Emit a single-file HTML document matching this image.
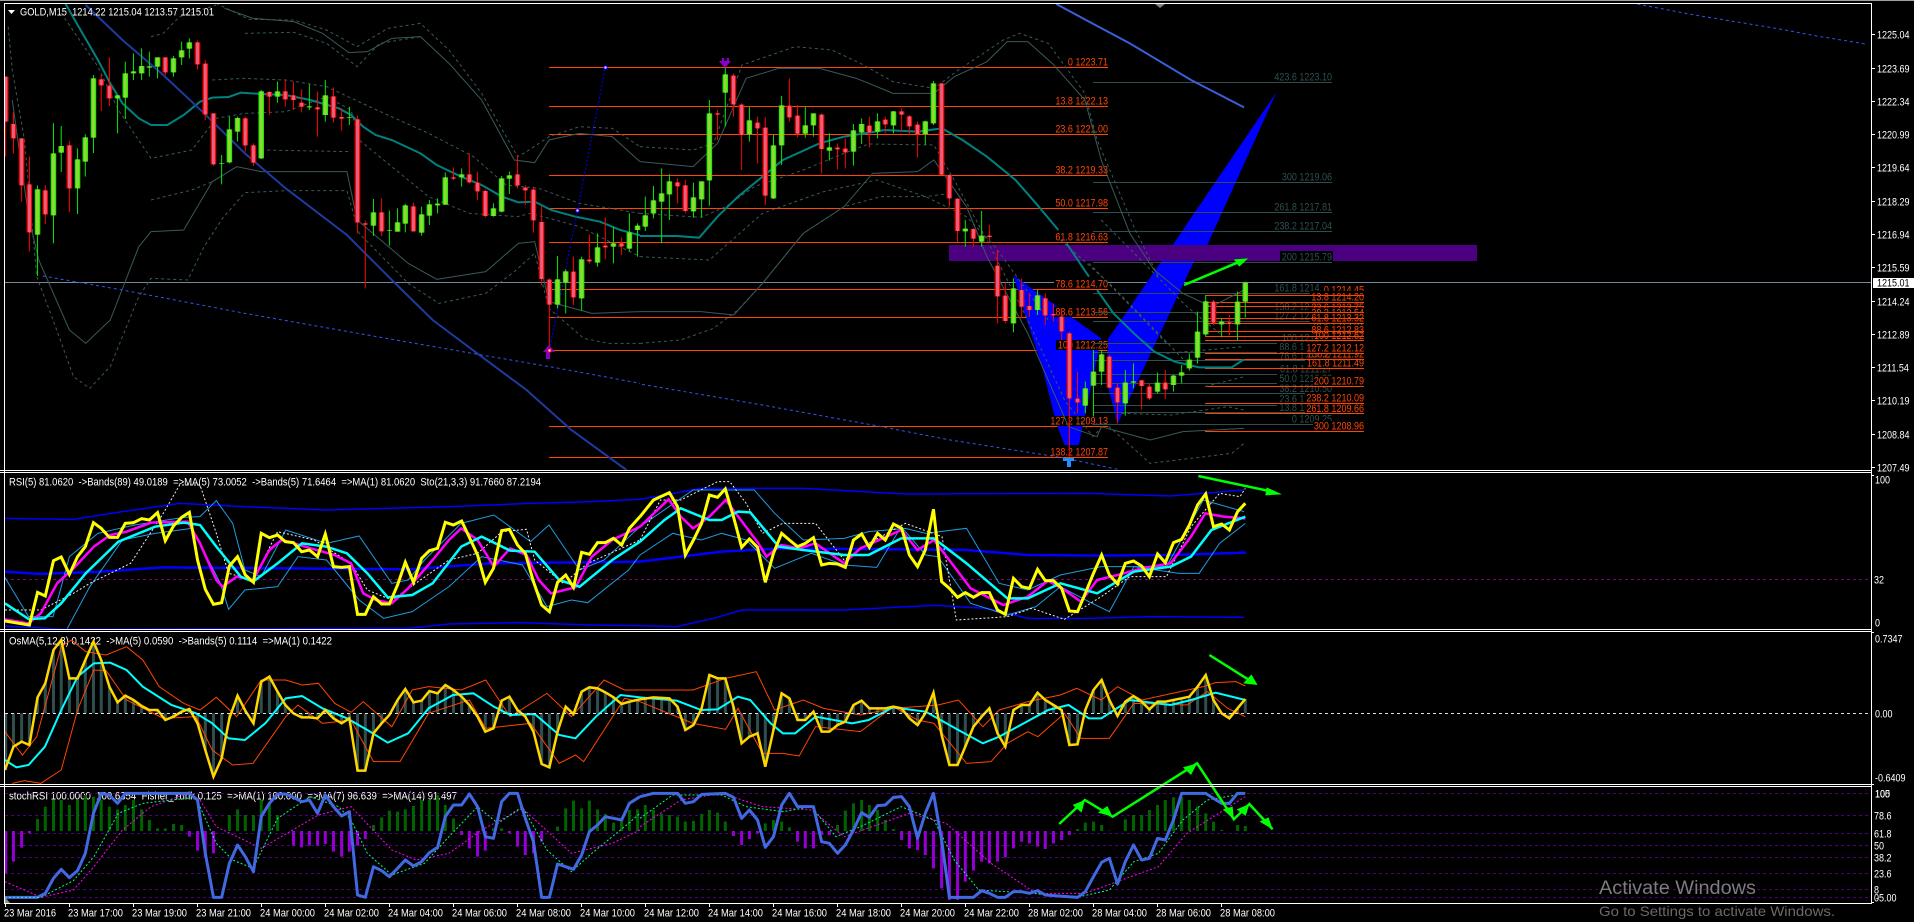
<!DOCTYPE html>
<html><head><meta charset="utf-8"><title>GOLD,M15</title>
<style>
html,body{margin:0;padding:0;background:#000;width:1914px;height:922px;overflow:hidden}
svg{display:block}
svg *{vector-effect:non-scaling-stroke}
text{font-family:"Liberation Sans",sans-serif;font-size:11px;white-space:pre;fill:#fff}
.o{fill:#ff4500;text-anchor:end}
.g{fill:#2f4f4f;text-anchor:end}
.n{fill:none}
.d{stroke-dasharray:3 3}
.s{stroke-dasharray:2 2}
</style></head><body>
<svg width="1914" height="922" viewBox="0 0 1914 922" xmlns="http://www.w3.org/2000/svg">
<defs>
<clipPath id="cm"><rect x="5" y="4" width="1866" height="466"/></clipPath>
<clipPath id="cr"><rect x="5" y="473" width="1866" height="156"/></clipPath>
<clipPath id="co"><rect x="5" y="632" width="1866" height="152"/></clipPath>
<clipPath id="cs"><rect x="5" y="787" width="1866" height="116"/></clipPath>
</defs>
<rect width="1914" height="922" fill="#000"/>
<rect x="0" y="0" width="1914" height="1" fill="#a0a0a0"/>

<!-- MAIN PANEL -->
<g clip-path="url(#cm)">
<rect x="5" y="282" width="1866" height="1" fill="#778899"/>
<!-- fib 1 lines -->
<path stroke="#ff4500" stroke-width="1" d="M549 67.5H1108M549 106.5H1108M549 134.5H1108M549 175.5H1108M549 208.5H1108M549 242.5H1108M549 289.5H1108M549 317.5H1108M549 350.5H1108M549 426.5H1108M549 457.5H1108"/>
<!-- harmonic polygons -->
<g transform="translate(640 0) scale(.40816 .33333)">
<polygon fill="#0000ff" points="915,826 1130,1015 1112,1120 1075,1335 1040,1335 1020,1270 985,1100 945,950"/>
<polygon fill="#0000ff" points="1560,275 1390,735 1355,790 1170,1272 1145,1150 1145,1020 1305,735"/>
</g>
<rect x="949" y="245" width="528" height="16" fill="#4b0082"/>
<!-- fib 1 labels -->
<g>
<rect x="1066" y="57" width="42" height="10" fill="#000"/><text class="o" transform="matrix(.82 0 0 1 1108 65.7)">0 1223.71</text>
<rect x="1054" y="96" width="54" height="10" fill="#000"/><text class="o" transform="matrix(.82 0 0 1 1108 104.7)">13.8 1222.13</text>
<rect x="1054" y="124" width="54" height="10" fill="#000"/><text class="o" transform="matrix(.82 0 0 1 1108 132.7)">23.6 1221.00</text>
<rect x="1054" y="165" width="54" height="10" fill="#000"/><text class="o" transform="matrix(.82 0 0 1 1108 173.7)">38.2 1219.33</text>
<rect x="1054" y="198" width="54" height="10" fill="#000"/><text class="o" transform="matrix(.82 0 0 1 1108 206.7)">50.0 1217.98</text>
<rect x="1054" y="232" width="54" height="10" fill="#000"/><text class="o" transform="matrix(.82 0 0 1 1108 240.7)">61.8 1216.63</text>
<rect x="1054" y="279" width="54" height="10" fill="#000"/><text class="o" transform="matrix(.82 0 0 1 1108 287.7)">78.6 1214.70</text>
<rect x="1054" y="307" width="54" height="10" fill="#000"/><text class="o" transform="matrix(.82 0 0 1 1108 315.7)">88.6 1213.56</text>
<rect x="1056" y="340" width="52" height="10" fill="#000"/><text class="o" transform="matrix(.82 0 0 1 1108 348.7)">100 1212.25</text>
<rect x="1049" y="416" width="59" height="10" fill="#000"/><text class="o" transform="matrix(.82 0 0 1 1108 424.7)">127.2 1209.13</text>
<rect x="1049" y="447" width="59" height="10" fill="#000"/><text class="o" transform="matrix(.82 0 0 1 1108 455.7)">138.2 1207.87</text>
</g>
<!-- fib 2 lines & labels -->
<path stroke="#2f4f4f" stroke-width="1" d="M1093 82.5H1332M1093 182.5H1332M1093 212.5H1332M1093 231.5H1332M1093 262.5H1332M1093 293.5H1332M1093 312.5H1332M1093 321.5H1332M1093 343.5H1332M1093 352.5H1332M1093 360.5H1332M1093 374.5H1332M1093 383.5H1332M1093 393.5H1332M1093 405.5H1332M1093 412.5H1332M1093 424.5H1332"/>
<g>
<rect x="1274" y="72" width="58" height="10" fill="#000"/><text class="g" transform="matrix(.82 0 0 1 1332 80.7)">423.6 1223.10</text>
<rect x="1280" y="172" width="52" height="10" fill="#000"/><text class="g" transform="matrix(.82 0 0 1 1332 180.7)">300 1219.06</text>
<rect x="1274" y="202" width="58" height="10" fill="#000"/><text class="g" transform="matrix(.82 0 0 1 1332 210.7)">261.8 1217.81</text>
<rect x="1274" y="221" width="58" height="10" fill="#000"/><text class="g" transform="matrix(.82 0 0 1 1332 229.7)">238.2 1217.04</text>
<rect x="1280" y="251" width="53" height="11" fill="#000"/><text class="g" transform="matrix(.82 0 0 1 1332 260.7)">200 1215.79</text>
<rect x="1272" y="283" width="60" height="10" fill="#000"/><text class="g" transform="matrix(.82 0 0 1 1332 291.3)">161.8 1214.54</text>
<rect x="1274" y="302" width="58" height="10" fill="#000"/><text class="g" transform="matrix(.82 0 0 1 1332 310.7)">138.2 1213.98</text>
<rect x="1274" y="310" width="58" height="10" fill="#000"/><text class="g" transform="matrix(.82 0 0 1 1332 319.3)">127.2 1213.74</text>
<rect x="1280" y="332" width="52" height="10" fill="#000"/><text class="g" transform="matrix(.82 0 0 1 1332 341.3)">100 1212.97</text>
<rect x="1277" y="342" width="55" height="10" fill="#000"/><text class="g" transform="matrix(.82 0 0 1 1332 350.7)">88.6 1212.66</text>
<rect x="1277" y="350" width="55" height="10" fill="#000"/><text class="g" transform="matrix(.82 0 0 1 1332 359.3)">78.6 1212.27</text>
<rect x="1277" y="364" width="55" height="10" fill="#000"/><text class="g" transform="matrix(.82 0 0 1 1332 372.7)">61.8 1211.27</text>
<rect x="1277" y="373" width="55" height="10" fill="#000"/><text class="g" transform="matrix(.82 0 0 1 1332 382)">50.0 1210.88</text>
<rect x="1277" y="383" width="55" height="10" fill="#000"/><text class="g" transform="matrix(.82 0 0 1 1332 392)">38.2 1210.50</text>
<rect x="1277" y="394" width="55" height="10" fill="#000"/><text class="g" transform="matrix(.82 0 0 1 1332 402.7)">23.6 1210.02</text>
<rect x="1277" y="402" width="55" height="10" fill="#000"/><text class="g" transform="matrix(.82 0 0 1 1332 411)">13.8 1209.70</text>
<rect x="1290" y="413" width="42" height="10" fill="#000"/><text class="g" transform="matrix(.82 0 0 1 1332 422.3)">0 1209.25</text>
</g>
<!-- fib 3 labels & lines -->
<g>
<rect x="1322" y="284" width="42" height="10" fill="#000"/><text class="o" transform="matrix(.82 0 0 1 1364 293.3)">0 1214.45</text>
<rect x="1310" y="291" width="54" height="11" fill="#000"/><text class="o" transform="matrix(.82 0 0 1 1364 300.3)">13.8 1214.20</text>
<rect x="1310" y="302" width="54" height="10" fill="#000"/><text class="o" transform="matrix(.82 0 0 1 1364 311)">23.6 1213.75</text>
<rect x="1310" y="308" width="54" height="10" fill="#000"/><text class="o" transform="matrix(.82 0 0 1 1364 316.5)">38.2 1213.54</text>
<rect x="1310" y="322" width="54" height="7" fill="#000"/><text class="o" transform="matrix(.82 0 0 1 1364 329.3)">78.6 1213.01</text>
<rect x="1310" y="312" width="54" height="11" fill="#000"/><text class="o" transform="matrix(.82 0 0 1 1364 321.3)">61.8 1213.32</text>
<rect x="1310" y="325" width="54" height="11" fill="#000"/><text class="o" transform="matrix(.82 0 0 1 1364 333.7)">88.6 1212.83</text>
<rect x="1314" y="335" width="50" height="5" fill="#000"/><text class="o" transform="matrix(.82 0 0 1 1364 339)">100 1212.62</text>
<rect x="1305" y="349" width="59" height="5" fill="#000"/><text class="o" transform="matrix(.82 0 0 1 1364 357.7)">138.2 1211.92</text>
<rect x="1305" y="343" width="59" height="11" fill="#000"/><text class="o" transform="matrix(.82 0 0 1 1364 351.7)">127.2 1212.12</text>
<rect x="1305" y="358" width="59" height="10" fill="#000"/><text class="o" transform="matrix(.82 0 0 1 1364 366.7)">161.8 1211.49</text>
<rect x="1313" y="376" width="51" height="10" fill="#000"/><text class="o" transform="matrix(.82 0 0 1 1364 384.7)">200 1210.79</text>
<rect x="1305" y="393" width="59" height="10" fill="#000"/><text class="o" transform="matrix(.82 0 0 1 1364 401.7)">238.2 1210.09</text>
<rect x="1305" y="403" width="59" height="10" fill="#000"/><text class="o" transform="matrix(.82 0 0 1 1364 412)">261.8 1209.66</text>
<rect x="1313" y="421" width="51" height="10" fill="#000"/><text class="o" transform="matrix(.82 0 0 1 1364 429.7)">300 1208.96</text>
</g>
<path stroke="#ff4500" stroke-width="1" d="M1205 295.5H1364M1205 302.5H1364M1205 306.5H1364M1205 312.5H1364M1205 318.5H1364M1205 323.5H1364M1205 331.5H1364M1205 336.5H1364M1205 340.5H1364M1205 353.5H1364M1205 359.5H1364M1205 368.5H1364M1205 386.5H1364M1205 403.5H1364M1205 413.5H1364M1205 431.5H1364"/>
<!-- left panel lines: zoom1 -->
<g transform="scale(.40816 .33333)" fill="none">
<g stroke="#3a5a5a" stroke-width="1">
<polyline points="30,300 70,650 95,780 170,990 210,1030 270,960 340,740 370,695 450,690 520,545 580,500 640,515 850,515 875,660 1000,790 1070,838 1190,815 1270,730 1310,725 1345,905 1450,940 1568,935"/>
<polyline points="550,25 620,55 720,65 790,100 855,158 900,155 960,115 1030,110 1100,190 1180,300 1260,480 1310,488 1345,420 1420,400 1500,410 1568,485"/>
</g>
<g stroke="#3a5a5a" stroke-width="1" class="d">
<polyline points="20,80 30,210 60,420 90,830 130,960 180,1130 220,1165 270,1100 340,890 370,835 460,840 500,740 545,655 600,578 700,572 850,572 880,700 1000,850 1075,910 1190,880 1260,815 1310,760 1345,925 1430,1015 1490,1030 1568,1030"/>
<polyline points="530,10 610,58 720,60 800,90 875,140 950,85 1030,70 1100,150 1180,280 1268,470 1290,455 1345,410 1420,380 1500,385 1568,440"/>
<polyline points="600,100 720,97 800,130 875,200 930,130 1030,110"/>
<polyline points="370,110 400,100 440,50 530,15"/>
<polyline points="520,240 600,235 700,240 800,260 870,300 950,345 1050,400 1160,470 1240,555 1320,565 1420,610 1568,640"/>
<polyline points="150,40 240,200 290,330 370,475 470,450 530,355 600,340 700,335 800,290 860,330 880,420 960,500 1050,590 1150,640 1268,650 1300,640 1420,680 1568,770"/>
<polyline points="370,600 470,570 520,545"/>
<polyline points="640,450 860,455"/>
</g>
<polyline stroke="#008080" stroke-width="2" points="160,10 195,85 240,180 270,250 300,310 340,355 370,375 410,375 450,345 490,305 520,293 560,291 590,278 640,282 700,285 760,300 830,325 860,345 890,380 920,405 960,420 1030,460 1070,495 1130,530 1180,555 1230,590 1270,607 1310,605 1350,630 1410,650 1470,665 1520,690 1568,706"/>
<polyline stroke="#1f3a9e" stroke-width="2" points="210,15 300,120 400,225 500,340 600,460 700,565 850,705 960,840 1060,960 1180,1070 1290,1170 1400,1290 1490,1370 1535,1410"/>
<polyline stroke="#3355ee" stroke-width="1" class="d" points="105,828 300,870 600,940 900,1005 1180,1065 1370,1105 1568,1150"/>
<polyline stroke="#0000ff" stroke-width="1" class="s" points="1346,1050 1415,630 1483,202"/>
<g stroke="#ff0000" stroke-width="1"><path d="M14 230V470M33 335V460M53 415V605M72 470V755M111 555V672M170 423V636M248 225V333M268 172V318M405 172V225M484 122V208M503 180V360M523 340V497M601 350V455M621 430V498M660 273V345M699 238V320M719 245V330M739 268V337M778 275V410M817 262V368M837 325V392M876 347V700M895 662V865M935 595V708M1013 608V695M1111 502V540M1150 460V550M1170 515V600M1189 568V653M1268 465V565M1287 556V615M1307 560V698M1327 618V855M1346 835V1050M1405 770V915M1444 703V790M1483 652V778M1523 712V765"/></g>
<g stroke="#00e800" stroke-width="1"><path d="M92 556V828M131 370V730M150 378V516M190 445V642M209 403V530M229 225V459M288 285V400M307 185V357M327 160V240M347 145V240M366 155V230M386 172V235M425 168V230M445 125V195M464 115V175M543 465V553M562 350V490M582 350V424M640 270V477M680 245V308M758 253V330M797 240V365M856 320V375M915 597V708M954 632V737M974 625V695M993 612V697M1033 620V707M1052 600V675M1072 595V640M1091 517V615M1131 505V560M1209 610V650M1229 528V637M1248 515V582M1366 768V925M1386 808V940M1425 770V932M1464 700V800M1503 680V790M1542 640V755M1562 670V770"/></g>
<g stroke="#ff0000" stroke-width="5.5"><path id="r1" d="M14 230V365M33 372V415M53 415V556M72 553V697M111 571V643M170 436V565M248 238V256M268 257V295M405 172V217M484 127V193M503 191V343M523 340V493M601 355V436M621 436V488M660 276V290M699 274V298M719 286V300M739 308V320M778 322V328M817 289V353M837 351V356M876 358V667M895 670V674M935 637V694M1013 619V694M1111 532V536M1150 523V547M1170 548V574M1189 573V648M1268 523V556M1287 563V571M1307 569V661M1327 666V837M1346 839V914M1405 815V892M1444 779V784M1483 737V742M1523 730V739"/></g>
<use href="#r1" stroke="#e4607c" stroke-width="3"/>
<g stroke="#22ee00" stroke-width="5.5"><path id="g1" d="M92 568V704M131 460V646M150 438V458M190 478V565M209 412V485M229 235V413M288 286V295M307 220V293M327 214V220M347 198V220M366 199V203M386 172V200M425 175V217M445 151V172M464 127V146M543 489V491M562 388V487M582 354V395M640 274V475M680 274V290M758 319V322M797 286V345M856 352V354M915 637V677M954 690V692M974 667V695M993 616V671M1033 643V698M1052 613V647M1072 611V616M1091 532V614M1131 523V532M1209 625V648M1229 535V635M1248 526V536M1366 838V914M1386 814V848M1425 778V895M1464 742V788M1503 730V740M1542 697V746M1562 677V690"/></g>
<use href="#g1" stroke="#90d838" stroke-width="3"/>
</g>
<!-- zoom2 lines -->
<g transform="translate(640 0) scale(.40816 .33333)" fill="none">
<g stroke="#3a5a5a" stroke-width="1">
<polyline points="0,485 130,500 190,430 260,235 340,205 440,205 530,235 620,280 720,280 770,230 850,185 900,125 950,125 1010,190 1090,300 1130,480 1200,700 1260,810 1330,880 1400,920 1480,870"/>
<polyline points="0,935 150,935 230,945 300,850 400,700 500,620 570,520 680,515 720,480 800,620 850,770 950,1000 1050,1280 1120,1310 1130,1280 1250,1320 1330,1295 1480,1285"/>
</g>
<g stroke="#3a5a5a" stroke-width="1" class="d">
<polyline points="0,440 130,450 180,430 250,195 380,140 470,150 540,190 620,245 720,265 780,210 890,120 930,100 1000,130 1090,280 1120,420 1210,680 1270,830"/>
<polyline points="0,640 150,652 210,620 280,560 400,510 500,460 560,432 720,435 770,540 850,720 950,960 1040,1200 1110,1310 1140,1270 1250,1390 1450,1360 1480,1330"/>
<polyline points="0,770 170,780 300,640 450,575 580,540 700,590 800,650 870,740 1000,960"/>
<polyline points="0,1030 100,1020 180,985 240,930 300,850 400,700 500,620 590,590 700,590 760,580"/>
<polyline points="1030,720 1150,850 1270,1000 1340,1090"/>
<polyline points="1100,790 1290,1030"/>
<polyline points="1130,660 1340,920 1420,1000"/>
<polyline points="1290,1060 1480,1040"/>
<polyline points="1385,1160 1480,1130"/>
<polyline points="1180,1240 1300,1245 1440,1220 1480,1230"/>
</g>
<polyline stroke="#008080" stroke-width="2" points="0,708 90,708 145,713 190,650 240,590 290,540 350,480 440,430 500,410 600,390 680,395 740,385 790,420 850,470 920,540 970,610 1025,690"/>
<polyline stroke="#008080" stroke-width="2" points="1045,730 1100,830"/>
<polyline stroke="#008080" stroke-width="2" points="1120,870 1160,940 1210,1000 1260,1055 1310,1085 1370,1102 1450,1102 1480,1078"/>
<polyline stroke="#3b5fd8" stroke-width="2" points="1020,12 1100,65 1200,130 1350,240 1480,322"/>
<polyline stroke="#3355ee" stroke-width="1" class="d" points="5,1153 300,1215 570,1275 760,1320 1030,1372 1170,1408"/>
<g stroke="#ff0000" stroke-width="1"><path d="M92 535V610M111 540V640M190 330V420M229 220V350M249 310V510M288 350V490M307 352V615M366 235V365M386 315V412M445 340V520M484 430V508M503 415V505M562 350V442M601 350V400M641 325V395M660 345V405M680 365V472M739 250V525M758 522V620M778 595V725M817 685V740M856 675V725M876 750V970M895 850V970M935 835V955M954 878V950M993 880V975M1013 910V965M1033 930V1020M1052 995V1370M1072 1115V1240M1150 1065V1165M1170 1150V1270M1229 1140V1228M1248 1150V1200M1287 1110V1197M1405 900V975M1444 945V1005"/></g>
<g stroke="#00e800" stroke-width="1"><path d="M13 590V693M33 558V655M53 505V730M72 522V660M131 548V653M151 545V652M170 300V617M209 200V380M268 320V425M327 403V597M347 288V495M405 320V413M425 340V410M464 400V482M523 372V497M543 355V432M582 340V415M621 333V400M699 362V435M719 243V375M797 660V740M837 633V740M915 835V997M974 870V945M1091 1145V1240M1111 1050V1250M1131 1050V1155M1189 1110V1247M1209 1090V1165M1268 1118V1180M1307 1125V1175M1327 1095V1150M1346 1060V1112M1366 935V1090M1386 885V1008M1425 955V1012M1464 875V1020M1483 845V952"/></g>
<g stroke="#ff0000" stroke-width="5.5"><path id="r2" d="M92 547V559M111 556V633M190 340V344M229 227V313M249 314V405M288 368V385M307 383V587M366 317V352M386 347V401M445 344V447M484 443V448M503 446V457M562 377V397M601 359V373M641 334V344M660 349V379M680 374V402M739 250V524M758 525V595M778 596V693M817 687V716M856 707V711M876 797V889M895 887V963M935 870V920M954 918V930M993 895V946M1013 942V946M1033 950V994M1052 1000V1195M1072 1196V1207M1150 1070V1163M1170 1163V1207M1229 1141V1158M1248 1160V1195M1287 1148V1168M1405 905V968M1444 967V972"/></g>
<use href="#r2" stroke="#e4607c" stroke-width="3"/>
<g stroke="#22ee00" stroke-width="5.5"><path id="g2" d="M13 646V680M33 601V640M53 580V605M72 544V583M131 592V634M151 544V598M170 340V541M209 223V278M268 361V403M327 436V595M347 316V436M405 376V401M425 340V376M464 442V452M523 391V455M543 372V397M582 364V395M621 334V376M699 364V402M719 250V370M797 686V694M837 707V725M915 865V970M974 886V930M1091 1165V1217M1111 1115V1157M1131 1063V1115M1189 1148V1210M1209 1144V1148M1268 1148V1175M1307 1127V1155M1327 1117V1127M1346 1079V1105M1366 995V1073M1386 904V1003M1425 965V973M1464 905V973M1483 848V905"/></g>
<use href="#g2" stroke="#90d838" stroke-width="3"/>
<polyline stroke="#00ff00" stroke-width="2.5" points="1333,855 1475,782"/>
<polygon fill="#00ff00" points="1490,775 1455,778 1468,800"/>
</g>
<!-- zoom3 -->
<g transform="translate(1274 0) scale(.40816 .33333)" fill="none">
<polyline stroke="#3355ee" stroke-width="1" class="d" points="890,12 1030,45 1230,85 1330,108 1455,133"/>
</g>
<!-- markers -->
<rect x="604" y="66" width="3" height="3" fill="#fff" stroke="#0000ff"/>
<rect x="576" y="209" width="3" height="3" fill="#fff" stroke="#0000ff"/>
<path d="M549 345l-6 7h3v7h4v-7h5z" fill="#8a00c8"/>
<path d="M725 68l-6-7h3v-3h2v3h3v-3h-0l2 0v3h2z" fill="#8a00c8"/>
<rect x="548" y="349" width="3" height="3" fill="#fff" stroke="#ff0000"/>
<path d="M1063 458h11v3h-3v6h-4v-6h-4z" fill="#1e90ff"/>
<path d="M1155 4h10l-5 4z" fill="#808080"/>
</g>
<text transform="translate(20 15.5)" textLength="194" lengthAdjust="spacingAndGlyphs">GOLD,M15  1214.22 1215.04 1213.57 1215.01</text>
<path d="M8 10h7l-3.500 4z" fill="#fff"/>

<!-- RSI PANEL -->
<text x="9" y="485.500" textLength="532" lengthAdjust="spacingAndGlyphs">RSI(5) 81.0620  -&gt;Bands(89) 49.0189  =&gt;MA(5) 73.0052  -&gt;Bands(5) 71.6464  =&gt;MA(1) 81.0620  Sto(21,3,3) 91.7660 87.2194</text>
<rect x="5" y="579" width="1866" height="1" fill="none"/>
<path d="M5 579.500H1871" stroke="#800080" class="d" stroke-width="1"/>
<g clip-path="url(#cr)"><g transform="translate(0 460) scale(.40816 .33333)" fill="none">
<polyline stroke="#0000ff" stroke-width="1.500" points="12,175 180,178 300,155 440,130 600,140 800,150 1100,140 1300,130 1450,125 1568,118"/>
<polyline stroke="#0000ff" stroke-width="2.500" points="12,335 100,342 250,335 400,322 700,325 1000,328 1200,310 1568,305"/>
<polyline stroke="#0000ff" stroke-width="1.500" points="12,498 160,508 1000,505 1100,492 1270,488 1450,495 1568,497"/>
<polyline stroke="#1e9be0" stroke-width="1" points="12,352 70,470 130,470 170,290 240,220 330,195 450,172 490,170 530,122 570,190 600,330 640,350 700,210 800,250 880,228 960,370 1000,360 1040,300 1130,190 1210,165 1300,245 1345,195 1420,330 1480,300 1568,200"/>
<polyline stroke="#1e9be0" stroke-width="1" points="165,505 220,380 300,240 380,220 470,205 540,370 560,448 600,390 680,380 730,290 800,300 880,420 940,475 1010,455 1100,380 1180,290 1280,315 1340,440 1400,420 1440,428 1540,330 1568,285"/>
<polyline stroke="#f0f0f0" stroke-width="1" class="s" points="12,450 100,450 180,400 220,370 320,310 400,160 440,75 490,75 530,220 560,340 620,360 680,215 770,240 860,310 900,390 960,420 1100,300 1170,280 1230,215 1290,208 1310,300 1380,370 1440,310 1568,240"/>
<polyline stroke="#ff00ff" stroke-width="2.500" points="12,478 70,490 100,460 140,370 180,325 230,260 270,225 310,215 370,188 460,185 490,250 530,360 545,380 580,350 620,360 660,270 690,240 720,250 770,268 820,285 860,310 890,400 920,420 960,430 1000,385 1060,300 1100,240 1130,205 1170,240 1210,320 1250,265 1290,285 1320,360 1350,400 1410,382 1450,290 1500,240 1568,200"/>
<polyline stroke="#00ffff" stroke-width="2.500" points="12,430 70,477 110,475 150,430 210,340 290,245 380,200 450,188 490,195 530,260 590,350 620,365 680,310 740,250 800,260 850,280 900,340 950,412 1010,405 1060,370 1130,260 1180,230 1250,272 1310,275 1370,360 1420,380 1500,300 1568,245"/>
<polyline stroke="#ffff00" stroke-width="3" points="12,483 33,487 72,495 92,397 111,408 131,302 150,291 170,343 190,290 209,260 229,188 248,205 268,232 288,232 307,190 327,188 347,176 366,180 386,158 405,242 425,198 445,172 464,157 484,300 503,388 523,433 543,428 562,318 582,290 601,345 621,367 640,220 660,233 680,225 699,245 719,248 739,275 758,270 778,290 797,222 817,320 837,322 856,320 876,463 895,463 915,410 935,432 954,432 974,375 993,307 1013,367 1033,295 1052,272 1072,265 1091,187 1111,195 1131,183 1150,232 1170,285 1189,367 1209,325 1229,212 1248,208 1268,255 1287,280 1307,365 1327,435 1346,455 1366,367 1386,345 1405,382 1425,277 1444,283 1464,248 1483,248 1503,235 1523,255 1542,205 1568,170"/>
</g>
<g transform="translate(640 460) scale(.40816 .33333)" fill="none">
<polyline stroke="#0000ff" stroke-width="1.500" points="0,118 150,85 400,85 650,102 1100,100 1300,108 1480,90"/>
<polyline stroke="#0000ff" stroke-width="2.500" points="0,305 200,275 350,265 800,270 950,285 1130,287 1300,285 1485,278"/>
<polyline stroke="#0000ff" stroke-width="1.500" points="0,497 90,500 180,475 250,450 500,450 720,436 850,445 950,475 1100,475 1250,470 1480,472"/>
<polyline stroke="#1e9be0" stroke-width="1" points="0,200 130,90 280,90 330,160 400,240 500,235 560,215 650,205 700,220 800,205 880,370 950,390 1030,345 1070,335 1130,320 1210,320 1290,320 1380,120 1480,155"/>
<polyline stroke="#1e9be0" stroke-width="1" points="0,285 80,220 150,240 200,220 260,240 330,325 420,280 500,315 580,322 640,200 700,285 730,290 810,430 900,465 970,440 1030,380 1100,425 1150,455 1210,320 1320,340 1370,340 1420,250 1483,190"/>
<polyline stroke="#f0f0f0" stroke-width="1" class="s" points="0,240 50,120 100,120 190,65 220,65 260,130 300,220 350,190 430,190 500,300 560,250 650,190 740,230 775,480 900,470 960,445 1040,478 1130,410 1200,350 1290,350 1350,200 1420,100 1470,110 1483,85"/>
<polyline stroke="#ff00ff" stroke-width="2.500" points="0,200 70,118 100,170 130,205 170,170 210,120 250,185 290,250 310,290 345,255 390,265 430,250 500,310 540,265 640,210 680,270 720,240 770,320 810,385 890,435 950,410 1000,362 1040,390 1080,425 1120,360 1170,345 1230,325 1300,310 1350,230 1385,160 1430,170 1483,175"/>
<polyline stroke="#00ffff" stroke-width="2.500" points="0,245 60,180 100,145 170,180 200,180 240,155 270,157 340,260 400,270 500,285 560,285 640,235 720,235 800,310 900,415 950,415 1030,370 1120,400 1210,335 1300,320 1350,290 1400,210 1483,170"/>
<polyline stroke="#ffff00" stroke-width="3" points="0,170 33,120 72,98 92,140 111,285 131,240 151,190 170,105 190,112 209,87 229,170 249,262 268,237 288,262 307,367 327,280 347,220 366,240 386,260 405,250 425,233 445,315 464,310 484,312 503,322 523,240 543,222 562,262 582,220 601,240 621,192 641,205 660,285 680,320 699,270 719,148 739,365 758,385 778,412 797,398 817,412 837,398 856,398 876,450 895,463 915,355 935,380 954,385 974,328 993,362 1013,362 1033,385 1052,453 1072,455 1091,400 1111,340 1131,285 1150,345 1170,372 1189,310 1209,303 1229,318 1248,350 1268,282 1287,308 1307,248 1327,238 1346,195 1366,135 1386,102 1405,200 1425,192 1444,210 1464,155 1483,130"/>
<polyline stroke="#00ff00" stroke-width="2.500" points="1368,48 1545,94"/>
<polygon fill="#00ff00" points="1573,103 1535,82 1532,106"/>
</g></g>

<!-- OsMA PANEL -->
<text x="9" y="644.500" textLength="323" lengthAdjust="spacingAndGlyphs">OsMA(5,12,3) 0.1422  -&gt;MA(5) 0.0590  -&gt;Bands(5) 0.1114  =&gt;MA(1) 0.1422</text>
<g clip-path="url(#co)"><g transform="translate(0 460) scale(.40816 .33333)" fill="none">
<path stroke="#2f4f4f" stroke-width="3" d="M14 760V930M33 760V860M53 760V845M72 760V855M92 760V712M111 760V670M131 760V570M150 760V540M170 760V655M190 760V655M209 760V600M229 760V545M248 760V600M268 760V680M288 760V727M307 760V707M327 760V720M347 760V738M366 760V750M386 760V750M405 760V780M425 760V770M445 760V755M464 760V747M484 760V790M503 760V870M523 760V950M543 760V895M562 760V775M582 760V707M601 760V752M621 760V790M640 760V665M660 760V650M680 760V695M699 760V735M719 760V760M739 760V772M758 760V772M778 760V775M797 760V750M817 760V775M837 760V790M856 760V775M876 760V932M895 760V932M915 760V820M935 760V790M954 760V765M974 760V720M993 760V687M1013 760V727M1033 760V722M1052 760V693M1072 760V700M1091 760V675M1111 760V690M1131 760V710M1150 760V735M1170 760V770M1189 760V815M1209 760V805M1229 760V722M1248 760V710M1268 760V750M1287 760V770M1307 760V815M1327 760V912M1346 760V922M1366 760V815M1386 760V740M1405 760V762M1425 760V695M1444 760V682M1464 760V685M1483 760V697M1503 760V712M1523 760V732M1542 760V725M1562 760V718"/>
<polyline stroke="#ff4500" stroke-width="1" points="12,815 55,885 90,830 150,560 175,540 210,575 260,585 310,560 350,600 390,680 450,730 490,750 530,712 580,770 640,660 700,660 740,675 780,670 820,730 860,757 890,725 960,800 1010,690 1050,680 1130,690 1190,660 1250,770 1340,700 1400,770 1480,660 1530,690 1568,690"/>
<polyline stroke="#ff4500" stroke-width="1" points="30,970 60,962 100,970 150,930 190,750 230,630 260,632 310,720 400,775 480,770 520,870 570,915 620,910 700,770 730,735 790,790 860,780 915,905 980,905 1050,760 1150,720 1190,805 1300,790 1370,910 1410,885 1430,905 1530,715 1568,725"/>
<polyline stroke="#00ffff" stroke-width="2" points="12,900 40,922 70,915 110,860 150,750 190,650 230,610 270,608 310,630 350,680 420,735 480,760 520,790 560,835 600,840 650,790 700,715 740,708 790,745 850,775 900,810 950,848 1000,820 1050,745 1110,705 1160,700 1210,740 1250,765 1310,762 1370,825 1410,835 1460,770 1520,705 1568,712"/>
<polyline stroke="#ffd700" stroke-width="2.500" points="12,930 33,860 53,845 72,855 92,712 111,670 131,570 150,540 170,655 190,655 209,600 229,545 248,600 268,680 288,727 307,707 327,720 347,738 366,750 386,750 405,780 425,770 445,755 464,747 484,790 503,870 523,950 543,895 562,775 582,707 601,752 621,790 640,665 660,650 680,695 699,735 719,760 739,772 758,772 778,775 797,750 817,775 837,790 856,775 876,932 895,932 915,820 935,790 954,765 974,720 993,687 1013,727 1033,722 1052,693 1072,700 1091,675 1111,690 1131,710 1150,735 1170,770 1189,815 1209,805 1229,722 1248,710 1268,750 1287,770 1307,815 1327,912 1346,922 1366,815 1386,740 1405,762 1425,695 1444,682 1464,685 1483,697 1503,712 1523,732 1542,725 1568,718"/>
</g>
<g transform="translate(640 460) scale(.40816 .33333)" fill="none">
<path stroke="#2f4f4f" stroke-width="3" d="M13 760V715M33 760V712M53 760V713M72 760V715M92 760V740M111 760V810M131 760V795M151 760V745M170 760V645M190 760V655M209 760V655M229 760V740M249 760V850M268 760V830M288 760V820M307 760V920M327 760V810M347 760V700M366 760V715M386 760V780M405 760V780M425 760V755M445 760V815M464 760V815M484 760V795M503 760V785M523 760V735M543 760V722M562 760V745M582 760V745M601 760V745M621 760V740M641 760V745M660 760V775M680 760V795M699 760V760M719 760V698M739 760V825M758 760V915M778 760V915M797 760V860M817 760V800M837 760V770M856 760V745M876 760V820M895 760V860M915 760V750M935 760V735M954 760V735M974 760V698M993 760V720M1013 760V735M1033 760V750M1052 760V855M1072 760V853M1091 760V750M1111 760V690M1131 760V660M1150 760V720M1170 760V768M1189 760V725M1209 760V708M1229 760V725M1248 760V748M1268 760V725M1287 760V725M1307 760V720M1327 760V715M1346 760V710M1366 760V680M1386 760V645M1405 760V720M1425 760V760M1444 760V775M1464 760V745M1483 760V717"/>
<polyline stroke="#ff4500" stroke-width="1" points="0,690 130,690 210,655 285,635 330,750 400,720 450,745 540,765 620,745 730,735 780,720 840,800 880,750 950,725 1030,705 1070,685 1130,720 1170,680 1230,720 1380,680 1410,668 1460,665 1483,678"/>
<polyline stroke="#ff4500" stroke-width="1" points="0,725 130,790 210,808 240,745 300,880 350,880 390,888 430,800 540,815 620,740 680,780 720,790 800,910 860,905 900,850 950,815 975,830 1040,760 1080,835 1150,835 1210,730 1340,735 1390,695 1440,745 1483,770"/>
<polyline stroke="#00ffff" stroke-width="2" points="0,712 90,722 150,750 190,748 240,710 270,720 320,790 350,820 380,820 430,770 520,790 560,780 620,742 700,755 780,810 840,850 880,830 940,790 1000,750 1050,735 1100,775 1130,775 1200,720 1300,735 1350,720 1410,698 1483,720"/>
<polyline stroke="#ffd700" stroke-width="2.500" points="0,718 33,712 72,715 92,740 111,810 131,795 151,745 170,645 190,655 209,655 229,740 249,850 268,830 288,820 307,920 327,810 347,700 366,715 386,780 405,780 425,755 445,815 464,815 484,795 503,785 523,735 543,722 562,745 582,745 601,745 621,740 641,745 660,775 680,795 699,760 719,698 739,825 758,915 778,915 797,860 817,800 837,770 856,745 876,820 895,860 915,750 935,735 954,735 974,698 993,720 1013,735 1033,750 1052,855 1072,853 1091,750 1111,690 1131,660 1150,720 1170,768 1189,725 1209,708 1229,725 1248,748 1268,725 1287,725 1307,720 1327,715 1346,710 1366,680 1386,645 1405,720 1425,760 1444,775 1464,745 1483,717"/>
<polyline stroke="#00ff00" stroke-width="2.500" points="1395,585 1495,662"/>
<polygon fill="#00ff00" points="1513,675 1478,670 1498,643"/>
</g></g>
<path d="M5 713.500H1871" stroke="#e0e0e0" class="d" stroke-width="1"/>

<!-- STOCH PANEL -->
<text x="9" y="799.500" textLength="448" lengthAdjust="spacingAndGlyphs">stochRSI 100.0000  100.6354  Fisher_Yurik 0.125  =&gt;MA(1) 100.000  =&gt;MA(7) 96.639  =&gt;MA(14) 91.497</text>
<path stroke="#4b0082" stroke-width="1" class="d" d="M5 793.500H1871M5 815.500H1871M5 833.500H1871M5 845.500H1871M5 857.500H1871M5 873.500H1871M5 889.500H1871M5 897.500H1871"/>
<g clip-path="url(#cs)"><g transform="translate(0 460) scale(.40816 .33333)" fill="none">
<path stroke="#006400" stroke-width="3" d="M92 1113V1077M111 1113V1040M131 1113V1020M150 1113V1020M170 1113V1035M190 1113V1020M209 1113V1005M229 1113V1010M248 1113V1020M268 1113V1040M288 1113V1048M307 1113V1035M327 1113V1020M347 1113V1048M366 1113V1080M386 1113V1105M405 1113V1105M425 1113V1092M445 1113V1095M562 1113V1065M582 1113V1048M601 1113V1065M621 1113V1065M640 1113V1020M660 1113V1030M680 1113V1065M915 1113V1095M935 1113V1072M954 1113V1052M974 1113V1055M993 1113V1048M1013 1113V1038M1033 1113V1020M1052 1113V1020M1072 1113V1005M1091 1113V1035M1111 1113V1075M1209 1113V1105M1229 1113V1105M1366 1113V1100M1386 1113V1045M1405 1113V1022M1425 1113V1045M1444 1113V1022M1464 1113V1048M1483 1113V1062M1503 1113V1088M1523 1113V1075M1542 1113V1050M1562 1113V1048"/>
<path stroke="#9400d3" stroke-width="3" d="M14 1113V1240M33 1113V1205M53 1113V1163M72 1113V1120M464 1113V1130M484 1113V1172M503 1113V1190M523 1113V1180M719 1113V1157M739 1113V1162M758 1113V1157M778 1113V1157M797 1113V1152M817 1113V1175M837 1113V1190M856 1113V1175M876 1113V1157M895 1113V1137M1131 1113V1125M1150 1113V1165M1170 1113V1190M1189 1113V1172M1248 1113V1120M1268 1113V1160M1287 1113V1185M1307 1113V1180M1327 1113V1145"/>
<polyline stroke="#ff00ff" stroke-width="1" class="s" points="12,1265 60,1290 100,1312 180,1290 230,1220 300,1110 370,1040 460,1000 490,1020 530,1100 640,1165 780,1065 860,1040 960,1170 1020,1200 1100,1180 1180,1110 1280,1045 1400,1180 1500,1150 1568,1110"/>
<polyline stroke="#00ff7f" stroke-width="1" class="s" points="12,1312 100,1312 180,1262 230,1190 290,1060 350,1030 420,1020 480,1012 530,1150 570,1200 620,1225 680,1075 760,1010 830,1040 860,1080 900,1180 960,1245 1040,1210 1100,1130 1170,1040 1220,1090 1280,1040 1340,1170 1400,1235 1450,1180 1540,1090 1568,1060"/>
<polyline stroke="#4169e1" stroke-width="3" stroke-linejoin="round" points="12,1312 92,1312 111,1300 131,1255 150,1228 170,1253 190,1232 209,1180 229,1060 248,1000 268,1005 288,1030 307,1000 464,1000 484,1020 503,1180 523,1312 543,1312 562,1210 582,1155 601,1190 621,1235 640,1070 660,1030 680,1002 699,1002 719,1012 739,1025 758,1020 778,1060 797,1005 817,1040 837,1068 856,1055 876,1305 895,1312 915,1220 935,1232 954,1250 974,1225 993,1200 1013,1218 1033,1205 1052,1178 1072,1162 1091,1070 1111,1035 1131,1035 1150,1002 1170,1040 1189,1130 1209,1135 1229,1025 1248,1000 1268,1000 1287,1075 1307,1145 1327,1312 1346,1312 1366,1212 1386,1220 1405,1228 1425,1185 1444,1115 1464,1095 1483,1070 1503,1075 1523,1080 1542,1030 1568,1010"/>
<polyline stroke="#40e0d0" stroke-width="1" class="s" points="12,1312 100,1312"/>
</g>
<g transform="translate(640 460) scale(.40816 .33333)" fill="none">
<path stroke="#006400" stroke-width="3" d="M13 1113V1035M33 1113V1050M53 1113V1062M72 1113V1065M92 1113V1070M111 1113V1085M131 1113V1083M151 1113V1062M170 1113V1050M190 1113V1058M209 1113V1085M307 1113V1090M327 1113V1080M347 1113V1085M366 1113V1102M484 1113V1095M503 1113V1052M523 1113V1030M543 1113V1020M562 1113V1035M582 1113V1050M601 1113V1080M621 1113V1107M1072 1113V1107M1091 1113V1088M1111 1113V1085M1131 1113V1095M1150 1113V1112M1189 1113V1078M1209 1113V1065M1229 1113V1065M1248 1113V1050M1268 1113V1035M1287 1113V1020M1307 1113V1012M1327 1113V1012M1346 1113V1020M1366 1113V1040M1386 1113V1060M1405 1113V1085M1425 1113V1110M1464 1113V1095M1483 1113V1098"/>
<path stroke="#9400d3" stroke-width="3" d="M229 1113V1128M249 1113V1155M268 1113V1137M288 1113V1120M386 1113V1145M405 1113V1165M425 1113V1165M445 1113V1125M464 1113V1125M641 1113V1140M660 1113V1165M680 1113V1170M699 1113V1185M719 1113V1225M739 1113V1285M758 1113V1320M778 1113V1320M797 1113V1265M817 1113V1232M837 1113V1205M856 1113V1210M876 1113V1205M895 1113V1192M915 1113V1165M935 1113V1145M954 1113V1150M974 1113V1160M993 1113V1167M1013 1113V1150M1033 1113V1140M1052 1113V1125"/>
<polyline stroke="#ff00ff" stroke-width="1" class="s" points="0,1100 100,1020 200,1000 300,1040 420,1050 500,1130 660,1060 750,1090 860,1210 970,1300 1090,1300 1270,1220 1340,1120 1483,1010"/>
<polyline stroke="#00ff7f" stroke-width="1" class="s" points="0,1075 80,1005 200,1005 260,1040 350,1055 420,1040 480,1130 540,1100 640,1040 720,1080 770,1200 830,1290 960,1300 1070,1312 1150,1290 1210,1205 1270,1180 1330,1080 1390,1020 1483,1000"/>
<polyline stroke="#4169e1" stroke-width="3" stroke-linejoin="round" points="0,1010 33,1000 92,1000 111,1030 131,1025 151,1003 209,1000 229,1012 249,1075 268,1050 288,1080 307,1162 327,1130 347,1035 366,1000 386,1040 405,1040 425,1040 445,1145 464,1150 484,1180 503,1155 523,1110 543,1058 562,1072 582,1037 601,1035 621,1012 641,1010 660,1040 680,1135 699,1060 719,1000 739,1140 758,1312 817,1312 837,1292 856,1300 876,1312 895,1312 915,1295 935,1295 954,1300 974,1292 993,1305 1072,1312 1091,1295 1111,1250 1131,1207 1150,1195 1170,1272 1189,1205 1209,1155 1229,1200 1248,1195 1268,1135 1287,1140 1307,1080 1327,1000 1386,1000 1405,1015 1425,1030 1444,1030 1464,1000 1483,1000"/>
</g></g>
<!-- stoch arrows (may overflow panel top) -->
<g transform="translate(640 460) scale(.40816 .33333)" fill="none">
<polyline stroke="#00ff00" stroke-width="2.500" points="1027,1092 1090,1020 1158,1070 1365,910 1455,1078 1493,1032 1550,1108"/>
<polygon fill="#00ff00" points="1090,1020 1060,1035 1082,1058"/>
<polygon fill="#00ff00" points="1158,1070 1122,1058 1145,1038"/>
<polygon fill="#00ff00" points="1365,910 1330,922 1350,945"/>
<polygon fill="#00ff00" points="1455,1078 1428,1048 1452,1040"/>
<polygon fill="#00ff00" points="1493,1032 1462,1048 1484,1068"/>
<polygon fill="#00ff00" points="1550,1108 1518,1085 1540,1072"/>
</g>

<!-- panel borders -->
<g fill="#fff">
<rect x="4" y="3" width="1868" height="1"/>
<rect x="0" y="470" width="1872" height="1"/>
<rect x="0" y="472" width="1872" height="1"/>
<rect x="0" y="629" width="1872" height="1"/>
<rect x="0" y="631" width="1872" height="1"/>
<rect x="0" y="784" width="1872" height="1"/>
<rect x="0" y="786" width="1872" height="1"/>
<rect x="4" y="903" width="1868" height="1"/>
<rect x="4" y="3" width="1" height="901"/>
<rect x="1871" y="3" width="1" height="901"/>
</g>
<path d="M5 897v6h5z" fill="#909090"/>

<!-- axis ticks -->
<path stroke="#fff" stroke-width="1" d="M1872 34.500h3M1872 68.500h3M1872 101.500h3M1872 134.500h3M1872 167.500h3M1872 201.500h3M1872 234.500h3M1872 267.500h3M1872 301.500h3M1872 334.500h3M1872 367.500h3M1872 400.500h3M1872 434.500h3M1872 467.500h3M1872 475.500h2M1872 632.500h2M1872 784.500h2M1872 902.500h2"/>
<path stroke="#fff" stroke-width="1" d="M5.500 904v3M69.500 904v3M133.500 904v3M197.500 904v3M261.500 904v3M325.500 904v3M389.500 904v3M453.500 904v3M517.500 904v3M581.500 904v3M645.500 904v3M709.500 904v3M773.500 904v3M837.500 904v3M901.500 904v3M965.500 904v3M1029.500 904v3M1093.500 904v3M1157.500 904v3M1221.500 904v3"/>

<!-- right axis labels -->
<g>
<text transform="matrix(.82 0 0 1 1877 38.300)">1225.04</text>
<text transform="matrix(.82 0 0 1 1877 72.300)">1223.69</text>
<text transform="matrix(.82 0 0 1 1877 105.300)">1222.34</text>
<text transform="matrix(.82 0 0 1 1877 138.300)">1220.99</text>
<text transform="matrix(.82 0 0 1 1877 171.300)">1219.64</text>
<text transform="matrix(.82 0 0 1 1877 205.300)">1218.29</text>
<text transform="matrix(.82 0 0 1 1877 238.300)">1216.94</text>
<text transform="matrix(.82 0 0 1 1877 271.300)">1215.59</text>
<text transform="matrix(.82 0 0 1 1877 305.300)">1214.24</text>
<text transform="matrix(.82 0 0 1 1877 338.300)">1212.89</text>
<text transform="matrix(.82 0 0 1 1877 371.300)">1211.54</text>
<text transform="matrix(.82 0 0 1 1877 404.300)">1210.19</text>
<text transform="matrix(.82 0 0 1 1877 438.300)">1208.84</text>
<text transform="matrix(.82 0 0 1 1877 471.700)">1207.49</text>
<rect x="1873" y="278" width="41" height="10" fill="#fff"/>
<text transform="matrix(.82 0 0 1 1877 286.500)" style="fill:#000">1215.01</text>
<text transform="matrix(.82 0 0 1 1875 483.700)">100</text>
<text transform="matrix(.82 0 0 1 1874 583.300)">32</text>
<text transform="matrix(.82 0 0 1 1875 626.700)">0</text>
<text transform="matrix(.82 0 0 1 1875 642.300)">0.7347</text>
<text transform="matrix(.82 0 0 1 1875 717.300)">0.00</text>
<text transform="matrix(.82 0 0 1 1875 781.300)">-0.6409</text>
<text transform="matrix(.82 0 0 1 1875 797.300)">100</text>
<text transform="matrix(.82 0 0 1 1875 797.300)">105</text>
<text transform="matrix(.82 0 0 1 1874 819.700)">78.6</text>
<text transform="matrix(.82 0 0 1 1874 837.300)">61.8</text>
<text transform="matrix(.82 0 0 1 1874 849.700)">50</text>
<text transform="matrix(.82 0 0 1 1874 861.300)">38.2</text>
<text transform="matrix(.82 0 0 1 1874 877.300)">23.6</text>
<text transform="matrix(.82 0 0 1 1874 893.300)">8</text>
<text transform="matrix(.82 0 0 1 1874 901.300)">0</text>
<text transform="matrix(.82 0 0 1 1876 901.300)">-5.00</text>
</g>

<!-- time axis -->
<g>
<text x="4" y="916.500" textLength="52" lengthAdjust="spacingAndGlyphs">23 Mar 2016</text>
<text x="68" y="916.500" textLength="55" lengthAdjust="spacingAndGlyphs">23 Mar 17:00</text>
<text x="132" y="916.500" textLength="55" lengthAdjust="spacingAndGlyphs">23 Mar 19:00</text>
<text x="196" y="916.500" textLength="55" lengthAdjust="spacingAndGlyphs">23 Mar 21:00</text>
<text x="260" y="916.500" textLength="55" lengthAdjust="spacingAndGlyphs">24 Mar 00:00</text>
<text x="324" y="916.500" textLength="55" lengthAdjust="spacingAndGlyphs">24 Mar 02:00</text>
<text x="388" y="916.500" textLength="55" lengthAdjust="spacingAndGlyphs">24 Mar 04:00</text>
<text x="452" y="916.500" textLength="55" lengthAdjust="spacingAndGlyphs">24 Mar 06:00</text>
<text x="516" y="916.500" textLength="55" lengthAdjust="spacingAndGlyphs">24 Mar 08:00</text>
<text x="580" y="916.500" textLength="55" lengthAdjust="spacingAndGlyphs">24 Mar 10:00</text>
<text x="644" y="916.500" textLength="55" lengthAdjust="spacingAndGlyphs">24 Mar 12:00</text>
<text x="708" y="916.500" textLength="55" lengthAdjust="spacingAndGlyphs">24 Mar 14:00</text>
<text x="772" y="916.500" textLength="55" lengthAdjust="spacingAndGlyphs">24 Mar 16:00</text>
<text x="836" y="916.500" textLength="55" lengthAdjust="spacingAndGlyphs">24 Mar 18:00</text>
<text x="900" y="916.500" textLength="55" lengthAdjust="spacingAndGlyphs">24 Mar 20:00</text>
<text x="964" y="916.500" textLength="55" lengthAdjust="spacingAndGlyphs">24 Mar 22:00</text>
<text x="1028" y="916.500" textLength="55" lengthAdjust="spacingAndGlyphs">28 Mar 02:00</text>
<text x="1092" y="916.500" textLength="55" lengthAdjust="spacingAndGlyphs">28 Mar 04:00</text>
<text x="1156" y="916.500" textLength="55" lengthAdjust="spacingAndGlyphs">28 Mar 06:00</text>
<text x="1220" y="916.500" textLength="55" lengthAdjust="spacingAndGlyphs">28 Mar 08:00</text>
</g>

<!-- watermark -->
<text x="1599" y="894" textLength="157" lengthAdjust="spacingAndGlyphs" style="font-size:19px;fill:#7c7c7c">Activate Windows</text>
<text x="1599" y="916" textLength="236" lengthAdjust="spacingAndGlyphs" style="font-size:14px;fill:#6a6a6a">Go to Settings to activate Windows.</text>
</svg>
</body></html>
